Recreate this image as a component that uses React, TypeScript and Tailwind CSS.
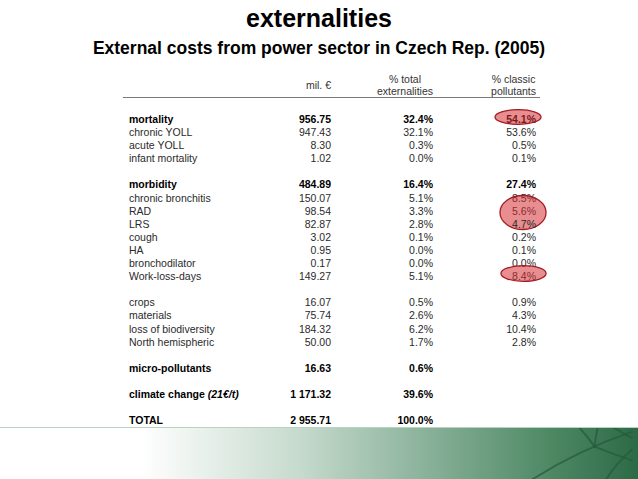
type Row = {
  label?: string;
  em?: string;
  value?: string;
  total?: string;
  classic?: string;
  bold?: boolean;
  mark?: "one" | "three" | "single";
};

const rows: Row[] = [
  { label: "mortality", value: "956.75", total: "32.4%", classic: "54.1%", bold: true, mark: "one" },
  { label: "chronic YOLL", value: "947.43", total: "32.1%", classic: "53.6%" },
  { label: "acute YOLL", value: "8.30", total: "0.3%", classic: "0.5%" },
  { label: "infant mortality", value: "1.02", total: "0.0%", classic: "0.1%" },
  {},
  { label: "morbidity", value: "484.89", total: "16.4%", classic: "27.4%", bold: true },
  { label: "chronic bronchitis", value: "150.07", total: "5.1%", classic: "8.5%" },
  { label: "RAD", value: "98.54", total: "3.3%", classic: "5.6%", mark: "three" },
  { label: "LRS", value: "82.87", total: "2.8%", classic: "4.7%" },
  { label: "cough", value: "3.02", total: "0.1%", classic: "0.2%" },
  { label: "HA", value: "0.95", total: "0.0%", classic: "0.1%" },
  { label: "bronchodilator", value: "0.17", total: "0.0%", classic: "0.0%" },
  { label: "Work-loss-days", value: "149.27", total: "5.1%", classic: "8.4%", mark: "single" },
  {},
  { label: "crops", value: "16.07", total: "0.5%", classic: "0.9%" },
  { label: "materials", value: "75.74", total: "2.6%", classic: "4.3%" },
  { label: "loss of biodiversity", value: "184.32", total: "6.2%", classic: "10.4%" },
  { label: "North hemispheric", value: "50.00", total: "1.7%", classic: "2.8%" },
  {},
  { label: "micro-pollutants", value: "16.63", total: "0.6%", bold: true },
  {},
  { label: "climate change ", em: "(21€/t)", value: "1 171.32", total: "39.6%", bold: true },
  {},
  { label: "TOTAL", value: "2 955.71", total: "100.0%", bold: true },
];

function Mark({ kind }: { kind: "one" | "three" | "single" }) {
  const box =
    kind === "one"
      ? "left-[61px] top-[-4px] w-[48px] h-[16px]"
      : kind === "three"
        ? "left-[66px] top-[-11px] w-[48px] h-[37px]"
        : "left-[67px] top-[-5px] w-[47px] h-[17px]";
  return (
    <svg className={`absolute ${box}`} viewBox="0 0 100 100" preserveAspectRatio="none">
      <ellipse
        cx="50"
        cy="50"
        rx="48"
        ry="46"
        fill="rgba(214,48,52,0.55)"
        stroke="#a31c22"
        strokeWidth="1.3"
        vectorEffect="non-scaling-stroke"
      />
    </svg>
  );
}

export default function App() {
  return (
    <div className="relative w-[638px] h-[479px] overflow-hidden bg-white font-['Liberation_Sans',Arial,sans-serif]">
      <h1 className="pt-[3px] text-center text-[25px] font-bold leading-[30px] text-black">externalities</h1>
      <h2 className="mt-[4px] text-center text-[17.5px] font-bold leading-[22px] text-black">
        External costs from power sector in Czech Rep. (2005)
      </h2>

      <div className="mt-[14px] ml-[123px] w-[417px] border-b border-[#7a7a7a]">
        <div className="flex h-[24px] pl-[6px] text-[10.5px] leading-[12px] text-[#333]">
          <div className="w-[130px]" />
          <div className="flex w-[72px] items-center justify-end">mil. €</div>
          <div className="flex w-[102px] justify-end">
            <div className="text-center">
              % total
              <br />
              externalities
            </div>
          </div>
          <div className="flex w-[103px] justify-end">
            <div className="text-center">
              % classic
              <br />
              pollutants
            </div>
          </div>
        </div>
      </div>

      <div className="mt-[15px] ml-[129px] text-[10.5px] leading-[13.1px]">
        {rows.map((r, i) => (
          <div
            key={i}
            className={`flex h-[13.1px] ${r.bold ? "font-bold text-black" : "text-[#2a2a2a]"}`}
          >
            <div className="w-[130px] whitespace-nowrap">
              {r.label}
              {r.em && <span className="italic">{r.em}</span>}
            </div>
            <div className="w-[72px] text-right">{r.value}</div>
            <div className="w-[102px] text-right">{r.total}</div>
            <div className="relative w-[103px] text-right">
              {r.classic}
              {r.mark && <Mark kind={r.mark} />}
            </div>
          </div>
        ))}
      </div>

      <div className="absolute bottom-0 left-0 h-[52px] w-full border-t border-[#b9d3c3] bg-[linear-gradient(90deg,#ffffff_0%,#ffffff_22%,#c6dacd_47%,#86af97_68%,#4e8964_86%,#2c6a45_100%)]">
        <svg className="absolute inset-0 h-full w-full" viewBox="0 0 638 52" fill="none">
          <g stroke="#275c3c" strokeOpacity="0.75" strokeWidth="2" strokeLinecap="round">
            <path d="M537 52 Q 585 22 638 4" />
            <path d="M585 0 Q 593 9 600 19" />
            <path d="M603 0 Q 601 10 600 19" />
            <path d="M600 19 Q 620 27 638 33" />
            <path d="M612 52 Q 622 36 638 22" />
            <path d="M620 0 Q 630 6 638 10" />
          </g>
        </svg>
      </div>
    </div>
  );
}
